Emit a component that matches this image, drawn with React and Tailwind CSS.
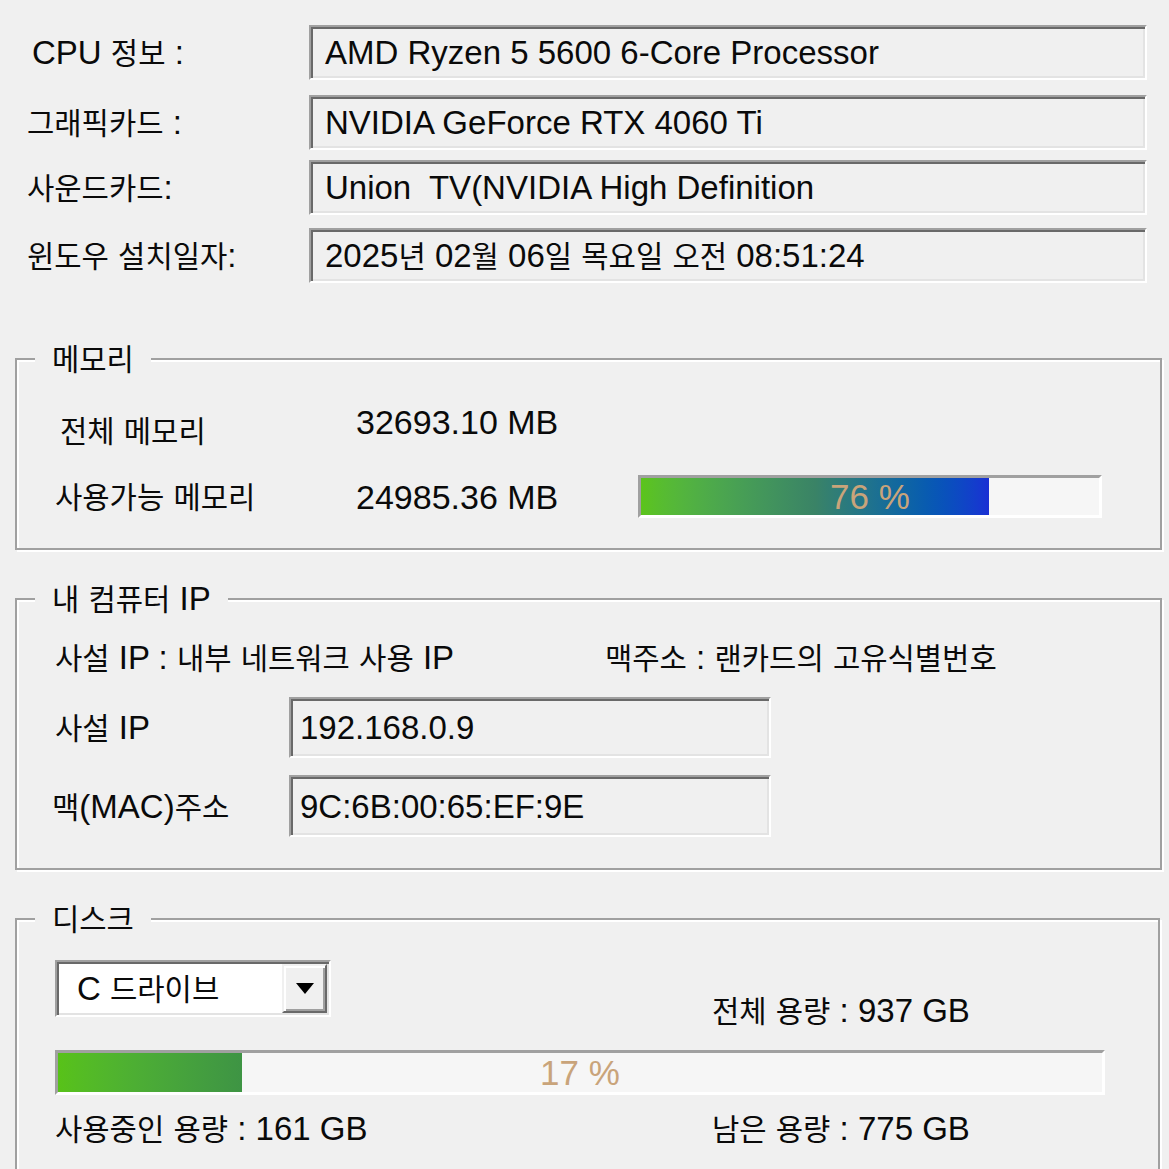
import React from 'react';

const sunken =
  'border-2 border-t-[#a0a0a0] border-l-[#a0a0a0] border-r-white border-b-white shadow-[inset_2px_2px_0_#696969,inset_-2px_-2px_0_#e3e3e3]';

// hangul runs are drawn a little smaller than the latin text, like the dialog font
const T = ({ s }) => (
  <span className="whitespace-pre">
    {s.split(/([\uAC00-\uD7A3]+)/).map((p, i) =>
      /[\uAC00-\uD7A3]/.test(p) ? (
        <span key={i} className="text-[0.9em]">
          {p}
        </span>
      ) : (
        p
      )
    )}
  </span>
);

const InfoRow = ({ label, value, pad, mt }) => (
  <div className={`flex items-center h-[55px] ${mt}`}>
    <div className={`w-[309px] ${pad}`}>
      <T s={label} />
    </div>
    <div className={`w-[838px] h-[55px] flex items-center pl-[14px] bg-[#f0f0f0] ${sunken}`}>
      <T s={value} />
    </div>
  </div>
);

const Group = ({ title, className, children }) => (
  <div className={`relative border-2 border-[#a0a0a0] shadow-[inset_2px_2px_0_#fff,2px_2px_0_#fff] ${className}`}>
    <div className="absolute left-[18px] top-[-18px] h-[32px] flex items-center px-[17px] bg-[#f0f0f0]">
      <T s={title} />
    </div>
    {children}
  </div>
);

const Progress = ({ pct, fill, className, fillClass }) => (
  <div className={`relative border-[3px] border-t-[#a0a0a0] border-l-[#a0a0a0] border-r-white border-b-white bg-[#f6f6f6] ${className}`}>
    <div className={`h-full ${fillClass}`} style={{ width: `${fill}%` }} />
    <div className="absolute inset-0 flex items-center justify-center text-[#c9a47a] text-[35px]">{pct} %</div>
  </div>
);

export default function App() {
  return (
    <div className="w-[1169px] h-[1169px] overflow-hidden bg-[#f0f0f0] text-[33px] leading-none text-[#0a0a0a] font-['Liberation_Sans','Noto_Sans_CJK_KR',sans-serif]">
      <div className="pt-[25px]">
        <InfoRow label="CPU 정보 :" value="AMD Ryzen 5 5600 6-Core Processor" pad="pl-[32px]" mt="" />
        <InfoRow label="그래픽카드 :" value="NVIDIA GeForce RTX 4060 Ti" pad="pl-[27px]" mt="mt-[15px]" />
        <InfoRow label="사운드카드:" value="Union  TV(NVIDIA High Definition" pad="pl-[27px]" mt="mt-[10px]" />
        <InfoRow label="윈도우 설치일자:" value="2025년 02월 06일 목요일 오전 08:51:24" pad="pl-[27px]" mt="mt-[13px]" />
      </div>

      <Group title="메모리" className="mt-[75px] ml-[15px] w-[1147px] h-[192px]">
        <div className="pt-[40px]">
          <div className="flex items-center h-[44px]">
            <div className="w-[339px] pl-[43px] mt-[16px]">
              <T s="전체 메모리" />
            </div>
            <div className="text-[34px]">32693.10 MB</div>
          </div>
          <div className="flex items-center h-[43px] mt-[31px]">
            <div className="w-[339px] pl-[38px]">
              <T s="사용가능 메모리" />
            </div>
            <div className="w-[282px] text-[34px]">24985.36 MB</div>
            <Progress
              pct={76}
              fill={76}
              className="w-[464px] h-[43px]"
              fillClass="bg-gradient-to-r from-[#5cc41a] via-[#3a8366] to-[#1a2fd4]"
            />
          </div>
        </div>
      </Group>

      <Group title="내 컴퓨터 IP" className="mt-[48px] ml-[15px] w-[1147px] h-[272px]">
        <div className="pt-[40px]">
          <div className="flex items-center h-[34px]">
            <div className="w-[588px] pl-[38px]">
              <T s="사설 IP : 내부 네트워크 사용 IP" />
            </div>
            <div>
              <T s="맥주소 : 랜카드의 고유식별번호" />
            </div>
          </div>
          <div className="flex items-center h-[61px] mt-[23px]">
            <div className="w-[272px] pl-[38px]">
              <T s="사설 IP" />
            </div>
            <div className={`w-[482px] h-[61px] flex items-center pl-[9px] ${sunken}`}>192.168.0.9</div>
          </div>
          <div className="flex items-center h-[62px] mt-[17px]">
            <div className="w-[272px] pl-[35px]">
              <T s="맥(MAC)주소" />
            </div>
            <div className={`w-[482px] h-[62px] flex items-center pl-[9px] ${sunken}`}>9C:6B:00:65:EF:9E</div>
          </div>
        </div>
      </Group>

      <Group title="디스크" className="mt-[48px] ml-[15px] w-[1145px] h-[300px]">
        <div className="pt-[40px]">
          <div className="flex items-start h-[57px]">
            <div className={`ml-[38px] w-[276px] h-[57px] flex p-[2px] bg-white ${sunken}`}>
              <div className="flex-1 flex items-center pl-[18px]">
                <T s="C 드라이브" />
              </div>
              <div className="w-[45px] flex items-center justify-center bg-[#f0f0f0] border-2 border-t-[#f0f0f0] border-l-[#f0f0f0] border-r-[#696969] border-b-[#696969] shadow-[inset_2px_2px_0_#fff,inset_-2px_-2px_0_#a0a0a0]">
                <svg width="18" height="11" viewBox="0 0 18 11">
                  <polygon points="0,0 18,0 9,11" fill="#000" />
                </svg>
              </div>
            </div>
            <div className="ml-[381px] mt-[34px]">
              <T s="전체 용량 : 937 GB" />
            </div>
          </div>
          <Progress
            pct={17}
            fill={17.6}
            className="ml-[38px] mt-[33px] w-[1050px] h-[45px]"
            fillClass="bg-gradient-to-r from-[#58c218] to-[#3e9444]"
          />
          <div className="flex items-center h-[33px] mt-[17px]">
            <div className="w-[695px] pl-[38px]">
              <T s="사용중인 용량 : 161 GB" />
            </div>
            <div>
              <T s="남은 용량 : 775 GB" />
            </div>
          </div>
        </div>
      </Group>
    </div>
  );
}
